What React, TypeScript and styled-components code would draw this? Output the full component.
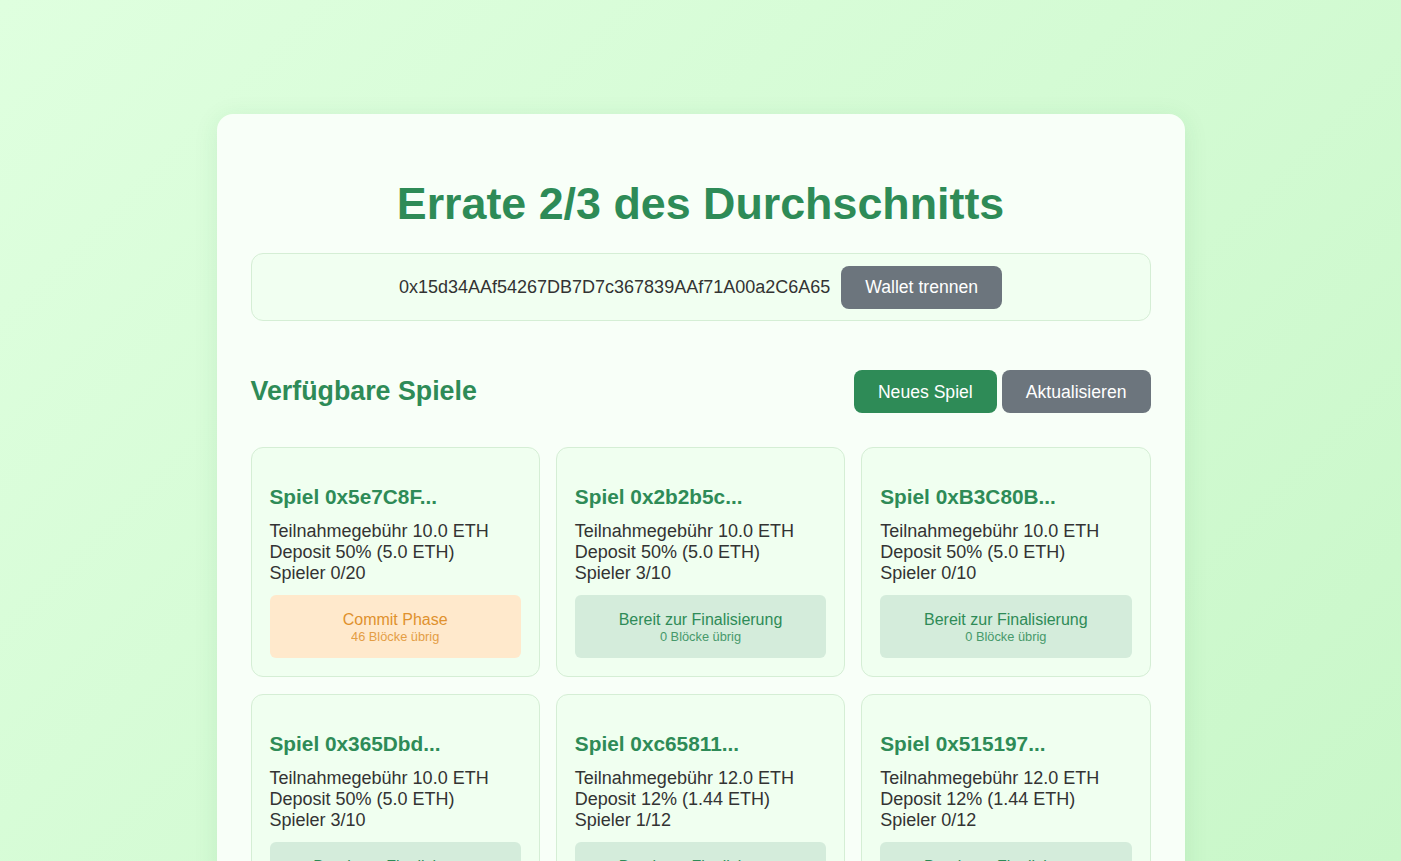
import React from "react";
import styled, { createGlobalStyle } from "styled-components";

const GlobalStyle = createGlobalStyle`
  html { scrollbar-width: none; }
  html::-webkit-scrollbar { display: none; }
  body {
    margin: 0;
    font-family: "Liberation Sans", Arial, sans-serif;
    background: linear-gradient(135deg, #dfffdf 0%, #c9f7c9 100%);
    background-attachment: fixed;
    min-height: 100vh;
    color: #333;
  }
`;

const Page = styled.div`
  display: flex;
  justify-content: center;
  padding: 114px 0 40px;
`;

const Panel = styled.main`
  width: 968px;
  box-sizing: border-box;
  background: #f8fff8;
  border-radius: 16px;
  box-shadow: 0 4px 24px rgba(40, 120, 60, 0.1);
  padding: 32px 34px;
`;

const Title = styled.h1`
  margin: 32px 0 24px;
  text-align: center;
  color: #2e8b57;
  font-size: 44.8px;
  font-weight: 700;
  line-height: normal;
`;

const WalletBox = styled.div`
  display: flex;
  align-items: center;
  justify-content: center;
  gap: 11px;
  padding: 11.5px 16px;
  background: #f1fff1;
  border: 1px solid #d5eed5;
  border-radius: 12px;
`;

const Address = styled.span`
  font-size: 18px;
  color: #333;
`;

const Button = styled.button<{ $variant: "green" | "gray" }>`
  box-sizing: border-box;
  height: 43px;
  font-family: "Liberation Sans", Arial, sans-serif;
  font-size: 17.6px;
  line-height: 20px;
  padding: 0 24px;
  border: none;
  border-radius: 8px;
  color: #fff;
  cursor: pointer;
  background: ${(p) => (p.$variant === "green" ? "#2e8b57" : "#6c757d")};
`;

const SectionHeader = styled.div`
  display: flex;
  align-items: center;
  justify-content: space-between;
  margin: 49px 0 34px;
`;

const SectionTitle = styled.h2`
  margin: 0;
  color: #2e8b57;
  font-size: 26.8px;
  font-weight: 700;
`;

const ButtonGroup = styled.div`
  display: flex;
  gap: 5px;
`;

const Grid = styled.div`
  display: grid;
  grid-template-columns: repeat(3, 1fr);
  column-gap: 16px;
  row-gap: 17px;
`;

const GameCard = styled.div`
  background: #f0fff0;
  border: 1px solid #d5eed5;
  border-radius: 12px;
  padding: 18px;
`;

const GameTitle = styled.h3`
  margin: 19px 0 12px;
  color: #2e8b57;
  font-size: 20.8px;
  font-weight: 700;
  line-height: 24px;
`;

const InfoLine = styled.div`
  font-size: 18px;
  line-height: 21px;
  color: #333;
`;

const Status = styled.div<{ $kind: "commit" | "ready" }>`
  margin-top: 11px;
  padding: 16px 12px 14px;
  border-radius: 6px;
  text-align: center;
  background: ${(p) => (p.$kind === "commit" ? "#ffe9cc" : "#d4ecdb")};
  color: ${(p) => (p.$kind === "commit" ? "#e0912d" : "#2e8b57")};
`;

const StatusLabel = styled.div`
  font-size: 16px;
  line-height: 18.5px;
`;

const StatusSub = styled.div`
  font-size: 12.8px;
  line-height: 14.7px;
  opacity: 0.85;
`;

type Game = {
  id: string;
  fee: string;
  deposit: string;
  players: string;
  kind: "commit" | "ready";
  blocks: number;
};

const games: Game[] = [
  { id: "0x5e7C8F", fee: "10.0", deposit: "50% (5.0 ETH)", players: "0/20", kind: "commit", blocks: 46 },
  { id: "0x2b2b5c", fee: "10.0", deposit: "50% (5.0 ETH)", players: "3/10", kind: "ready", blocks: 0 },
  { id: "0xB3C80B", fee: "10.0", deposit: "50% (5.0 ETH)", players: "0/10", kind: "ready", blocks: 0 },
  { id: "0x365Dbd", fee: "10.0", deposit: "50% (5.0 ETH)", players: "3/10", kind: "ready", blocks: 0 },
  { id: "0xc65811", fee: "12.0", deposit: "12% (1.44 ETH)", players: "1/12", kind: "ready", blocks: 0 },
  { id: "0x515197", fee: "12.0", deposit: "12% (1.44 ETH)", players: "0/12", kind: "ready", blocks: 0 },
];

export default function App() {
  return (
    <>
      <GlobalStyle />
      <Page>
        <Panel>
          <Title>Errate 2/3 des Durchschnitts</Title>
          <WalletBox>
            <Address>0x15d34AAf54267DB7D7c367839AAf71A00a2C6A65</Address>
            <Button $variant="gray">Wallet trennen</Button>
          </WalletBox>
          <SectionHeader>
            <SectionTitle>Verfügbare Spiele</SectionTitle>
            <ButtonGroup>
              <Button $variant="green">Neues Spiel</Button>
              <Button $variant="gray">Aktualisieren</Button>
            </ButtonGroup>
          </SectionHeader>
          <Grid>
            {games.map((g) => (
              <GameCard key={g.id}>
                <GameTitle>Spiel {g.id}...</GameTitle>
                <InfoLine>Teilnahmegebühr {g.fee} ETH</InfoLine>
                <InfoLine>Deposit {g.deposit}</InfoLine>
                <InfoLine>Spieler {g.players}</InfoLine>
                <Status $kind={g.kind}>
                  <StatusLabel>{g.kind === "commit" ? "Commit Phase" : "Bereit zur Finalisierung"}</StatusLabel>
                  <StatusSub>{g.blocks} Blöcke übrig</StatusSub>
                </Status>
              </GameCard>
            ))}
          </Grid>
        </Panel>
      </Page>
    </>
  );
}
